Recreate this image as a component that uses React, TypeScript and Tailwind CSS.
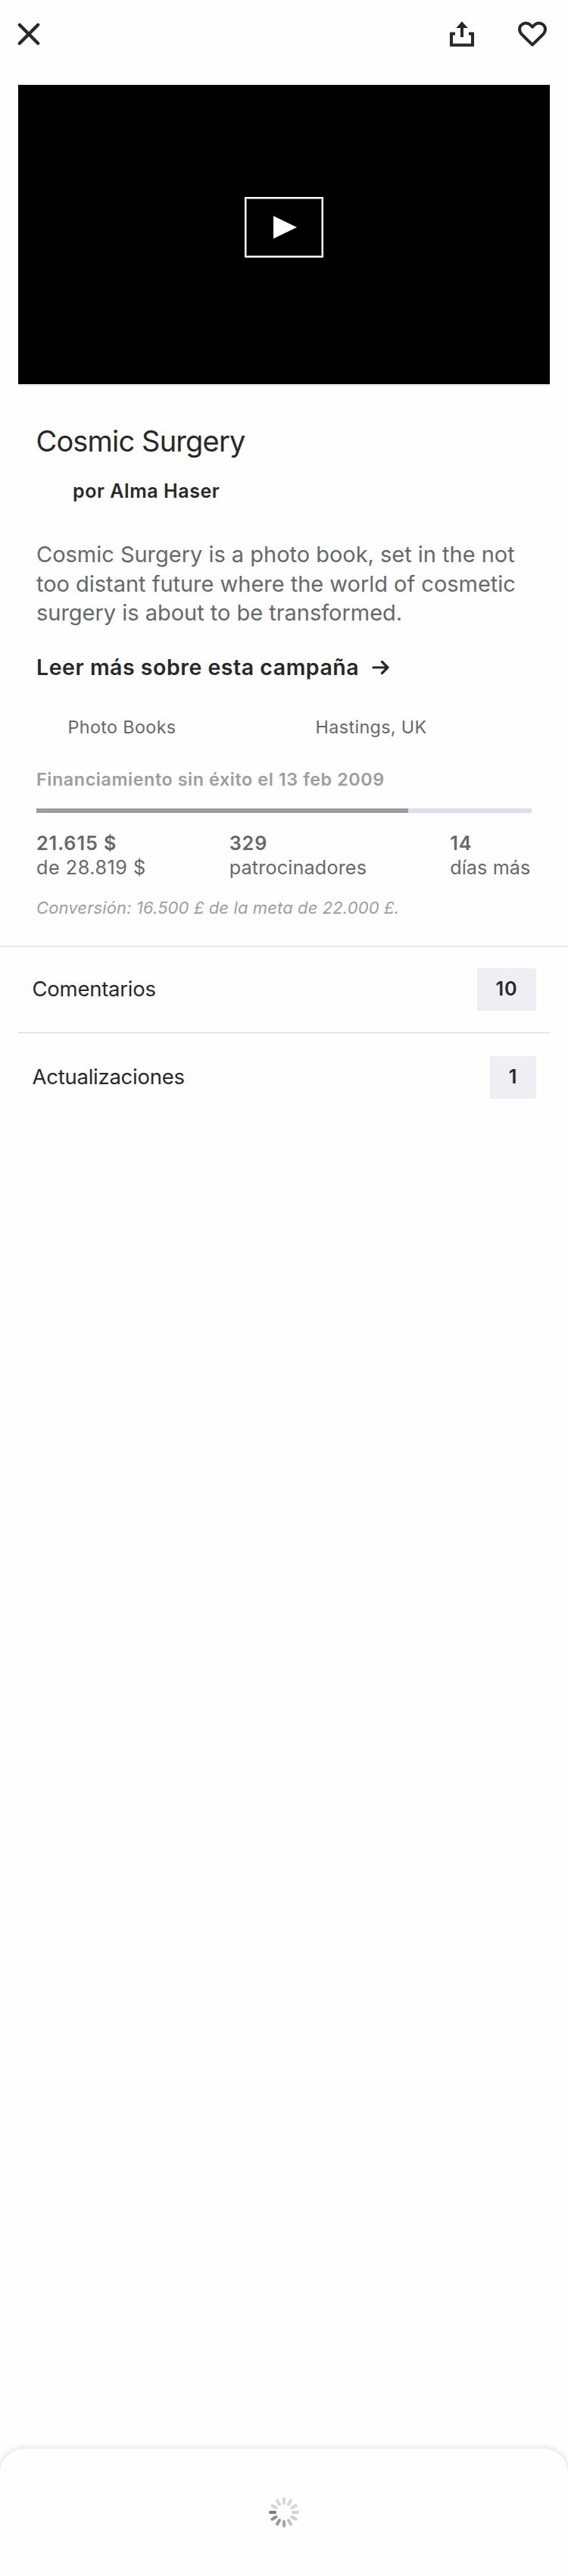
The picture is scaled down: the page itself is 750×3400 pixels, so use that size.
const spokes = ["#7b7d7d", "#8d8f8f", "#989a9a", "#a6a8a8", "#bfc1c1", "#cccece", "#d3d5d5", "#d5d7d7", "#d5d7d7", "#d5d7d7", "#d5d7d7", "#d5d7d7"];

function CloseIcon() {
  return (
    <svg width="32" height="32" viewBox="0 0 32 32" fill="none" stroke="#282828" strokeWidth="4.4" strokeLinecap="round">
      <path d="M3.8 3.8 28.2 28.2M28.2 3.8 3.8 28.2" />
    </svg>
  );
}

function ShareIcon() {
  return (
    <svg width="36" height="36" viewBox="0 0 36 36" fill="none" stroke="#282828" strokeWidth="4">
      <path d="M9 17.4H4V32.6H32V17.4H27" />
      <path d="M18 9V22" />
      <path d="M18 1.2 25.8 10H10.2Z" fill="#282828" stroke="none" />
    </svg>
  );
}

function HeartIcon() {
  return (
    <svg width="40" height="36" viewBox="0 0 40 36" fill="none" stroke="#282828" strokeWidth="4" strokeLinejoin="round">
      <path d="M20 32.2 6.2 18.6C2 14.3 2.2 9 5.5 5.9 9 2.6 14 2.7 17 5.7L20 8.7 23 5.7C26 2.7 31 2.6 34.5 5.9 37.8 9 38 14.3 33.8 18.6Z" />
    </svg>
  );
}

function Spinner() {
  return (
    <svg width="40" height="40" viewBox="-20 -20 40 40" strokeWidth="4" strokeLinecap="round">
      {spokes.map((color, i) => (
        <path key={i} d="M-18 0H-12" stroke={color} transform={`rotate(${-30 * i})`} />
      ))}
    </svg>
  );
}

function Stat({ value, label, labelClass }: { value: string; label: string; labelClass: string }) {
  return (
    <div className="text-[25.2px] leading-8 text-[#656969]">
      <div className="font-semibold tracking-[0.9px]">{value}</div>
      <div className={labelClass}>{label}</div>
    </div>
  );
}

function Badge({ children, className }: { children: string; className: string }) {
  return (
    <span className={`flex h-14 items-center justify-center bg-[#eeeef3] text-[25.2px] font-semibold tracking-[0.8px] ${className}`}>
      {children}
    </span>
  );
}

export default function App() {
  return (
    <div className="flex h-[3400px] w-[750px] flex-col bg-[#fefefe] font-['Inter','Liberation_Sans',sans-serif] text-[#282828]">
      <header className="flex h-28 items-start justify-between pt-[27px] pr-[27px] pl-[22px]">
        <button className="mt-[2px]" aria-label="Cerrar"><CloseIcon /></button>
        <div className="flex gap-[55px]">
          <button aria-label="Compartir"><ShareIcon /></button>
          <button aria-label="Guardar"><HeartIcon /></button>
        </div>
      </header>

      <div className="mx-6 flex h-[397px] items-center justify-center border-b-2 border-[#e6e6e6] bg-black">
        <div className="-mt-[19px] flex h-20 w-[104px] items-center justify-center border-2 border-white pl-[2px] shadow-[inset_0_0_0_1px_#808080]">
          <svg width="32" height="30" viewBox="0 0 32 30" fill="white"><path d="M1 0 32 15 1 30Z" /></svg>
        </div>
      </div>

      <section className="flex flex-col px-12">
        <h1 className="mt-[49px] -ml-[0.5px] text-[38px] leading-[48px] tracking-[-0.84px]">Cosmic Surgery</h1>
        <p className="mt-[27px] pl-12 text-[25px] leading-[30px] font-semibold tracking-[0.57px]">por Alma Haser</p>
        <p className="mt-[50px] text-[29px] leading-[38.5px] tracking-[-0.02px] whitespace-nowrap text-[#656969]">
          Cosmic Surgery is a photo book, set in the not<br />
          too distant future where the world of cosmetic<br />
          surgery is about to be transformed.
        </p>
        <div className="mt-[34px] flex items-center text-[28.5px] leading-9 font-semibold tracking-[0.52px]">
          <span>Leer más sobre esta campaña</span>
          <svg className="ml-[17px]" width="24" height="22" viewBox="0 0 24 22" fill="none" stroke="#282828" strokeWidth="3.2" strokeLinecap="round" strokeLinejoin="round">
            <path d="M2 11H21M13.5 3.5 21 11 13.5 18.5" />
          </svg>
        </div>
        <div className="mt-[47px] grid grid-cols-2 text-[23.3px] leading-7 tracking-[0.37px] text-[#656969]">
          <span className="pl-[41.6px]">Photo Books</span>
          <span className="pl-[41.6px]">Hastings, UK</span>
        </div>
        <p className="mt-[41px] text-[23.3px] leading-7 font-semibold tracking-[0.59px] text-[#9b9e9e]">Financiamiento sin éxito el 13 feb 2009</p>
        <div className="mt-6 h-1.5 w-[654px] bg-[#dcdee9]">
          <div className="h-full w-[490.5px] bg-[#9b9e9e]" />
        </div>
        <div className="mt-6 flex w-[652.5px] justify-between">
          <Stat value="21.615 $" label="de 28.819 $" labelClass="tracking-[0.52px]" />
          <Stat value="329" label="patrocinadores" labelClass="tracking-[0.16px]" />
          <Stat value="14" label="días más" labelClass="tracking-[0.1px]" />
        </div>
        <p className="mt-[23px] text-[22px] leading-7 tracking-[0.12px] text-[#9b9e9e] italic">Conversión: 16.500 £ de la meta de 22.000 £.</p>
      </section>

      <section className="mt-9 border-t-2 border-[#e8e8e8] text-[27.5px] tracking-[-0.25px]">
        <div className="mx-6 flex h-[114px] items-center justify-between border-b-2 border-[#e8e8e8] pr-[18px] pl-[18.5px]">
          <span className="pt-px">Comentarios</span>
          <Badge className="w-[78px]">10</Badge>
        </div>
        <div className="mx-6 flex h-[116px] items-center justify-between pr-[18px] pl-[18.5px]">
          <span className="pt-px">Actualizaciones</span>
          <Badge className="w-[61px]">1</Badge>
        </div>
      </section>

      <footer className="mt-auto flex h-42 justify-center rounded-t-[32px] bg-[#fefefe] pt-16 shadow-[0_0_8px_rgba(0,0,0,0.17)]">
        <Spinner />
      </footer>
    </div>
  );
}
